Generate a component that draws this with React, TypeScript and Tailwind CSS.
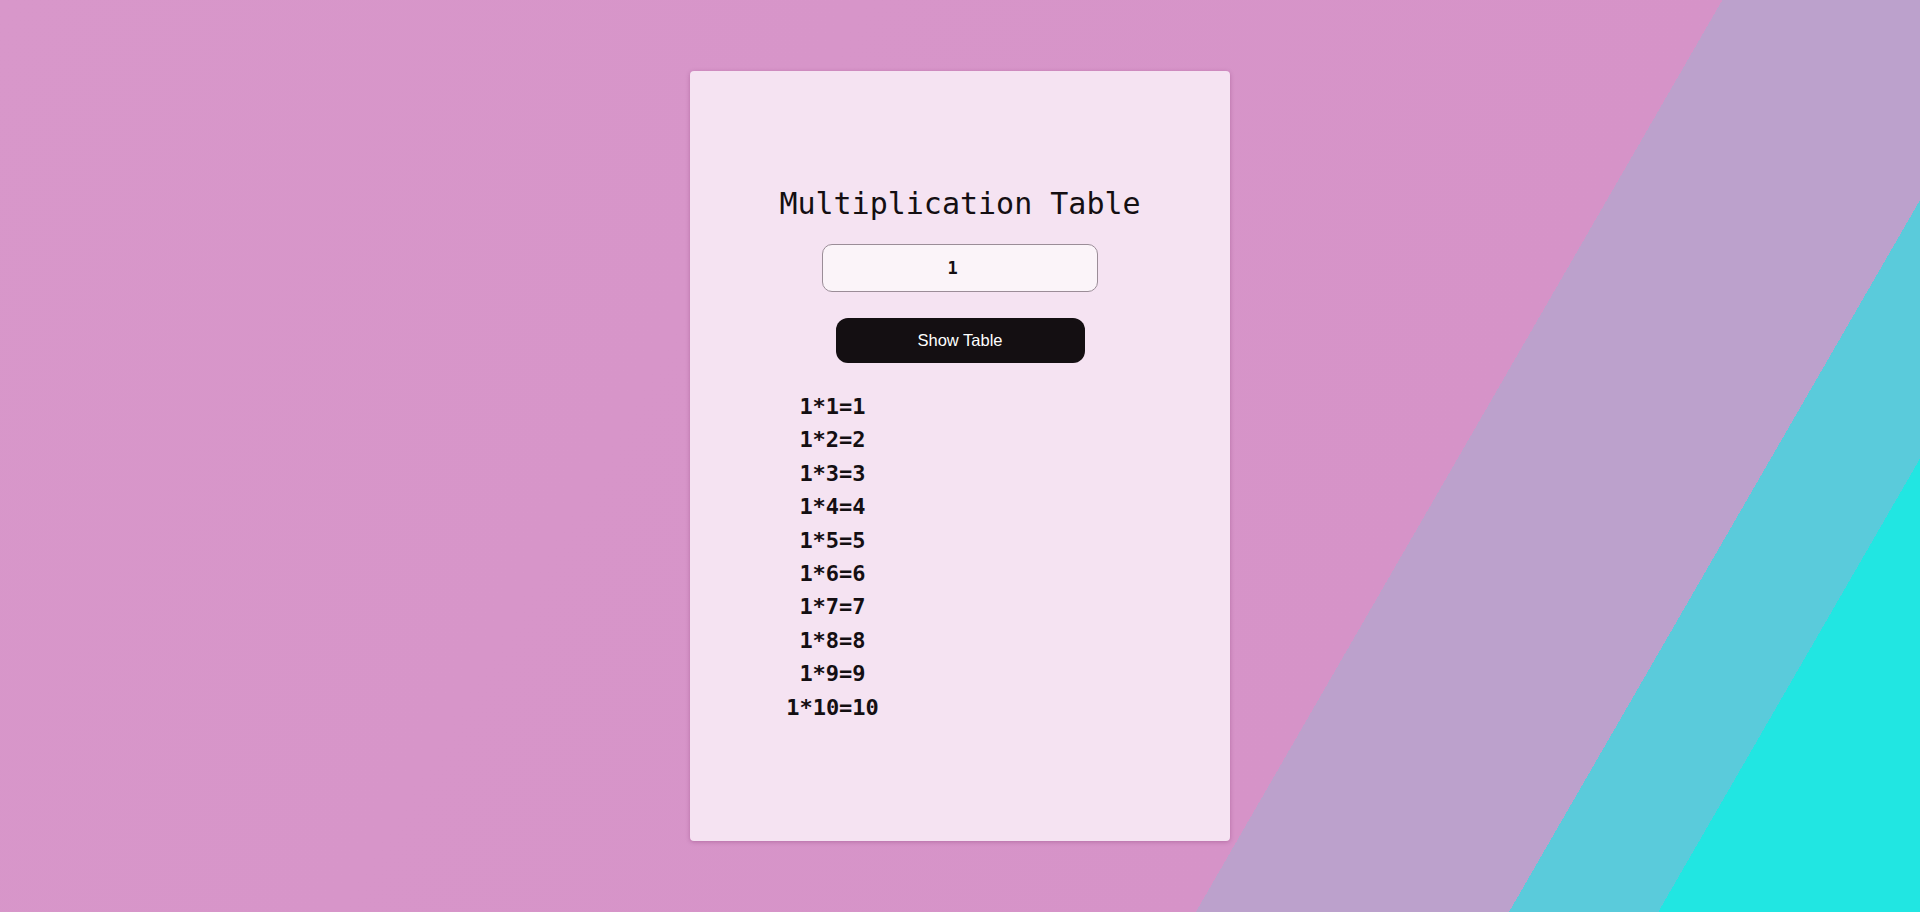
import { useState } from 'react';

function buildRows(n: number) {
  return Array.from({ length: 10 }, (_, i) => `${n}*${i + 1}=${n * (i + 1)}`);
}

export default function App() {
  const [value, setValue] = useState('1');
  const [rows, setRows] = useState<string[]>(() => buildRows(1));

  return (
    <div className="flex h-[912px] w-full items-center justify-center bg-[linear-gradient(120deg,#d897ca_0%,#d693c8_70.4%,#bca1cc_70.4%,#bca1cc_83.2%,#5acbdb_83.2%,#5acbdb_89.3%,#21e6e2_89.3%)]">
      <div className="flex h-[770px] w-[540px] flex-col items-center rounded bg-[#f5e3f2] pt-[115px] font-['DejaVu_Sans_Mono','Liberation_Mono',monospace] text-[#140f12] shadow-[0_1px_4px_rgba(120,40,100,0.35)]">
        <h1 className="text-[30px] leading-[36px] font-normal">Multiplication Table</h1>

        <input
          type="number"
          value={value}
          onChange={(e) => setValue(e.target.value)}
          className="mt-[22px] h-[48px] w-[276px] rounded-[10px] border border-[#9b8d98] bg-[#fbf4f9] text-center text-[17px] font-bold text-[#140f12] outline-none"
        />

        <button
          onClick={() => setRows(buildRows(Number(value) || 0))}
          className="mt-[26px] h-[45px] w-[249px] rounded-[12px] bg-[#140f12] font-['Liberation_Sans',Arial,sans-serif] text-[16.5px] text-white"
        >
          Show Table
        </button>

        <div className="mt-[27px] w-full">
          <div className="w-[285px] text-center text-[22px] leading-[33.4px] font-bold">
            {rows.map((r) => (
              <div key={r}>{r}</div>
            ))}
          </div>
        </div>
      </div>
    </div>
  );
}
